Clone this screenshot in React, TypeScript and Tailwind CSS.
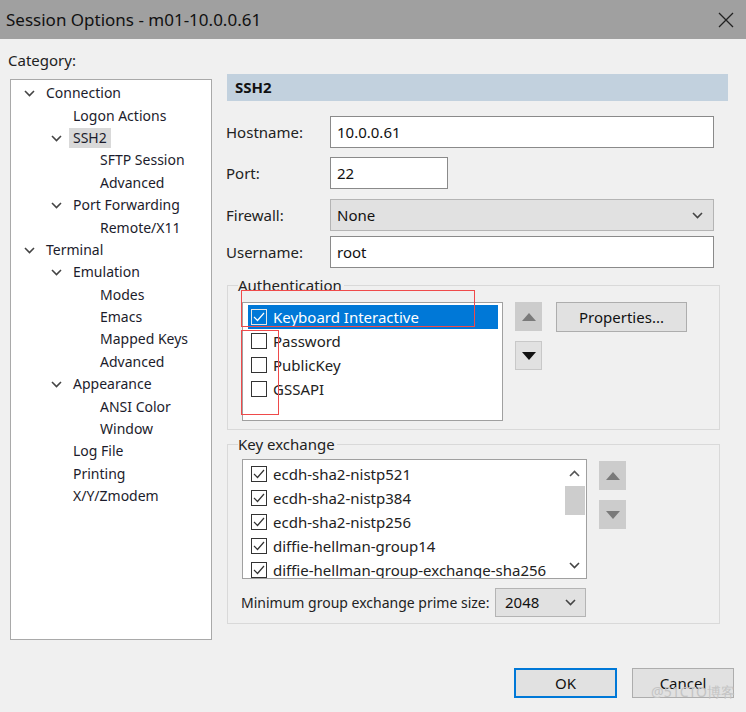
import React from "react"

const FONT = { fontFamily: '"Noto Sans", "Open Sans", sans-serif' }

function Chevron({ className = "" }: { className?: string }) {
  return (
    <svg width="11" height="7" viewBox="0 0 11 7" className={className}>
      <polyline points="1,1 5.5,5.5 10,1" fill="none" stroke="#444" strokeWidth="1.6" />
    </svg>
  )
}

function Check({ checked, light }: { checked?: boolean; light?: boolean }) {
  return (
    <div
      className={
        "w-[16px] h-[16px] border flex items-center justify-center shrink-0 " +
        (light ? "border-[#e6e6e6] bg-[#0078d7]" : "border-[#333] bg-white")
      }
    >
      {checked && (
        <svg width="12" height="10" viewBox="0 0 12 10">
          <polyline
            points="1,5 4.5,8.5 11,1"
            fill="none"
            stroke={light ? "#ffffff" : "#333"}
            strokeWidth="1.2"
          />
        </svg>
      )}
    </div>
  )
}

function Tri({ up, dark }: { up?: boolean; dark?: boolean }) {
  return (
    <svg width="14" height="8" viewBox="0 0 14 8">
      <polygon
        points={up ? "0,8 14,8 7,0" : "0,0 14,0 7,8"}
        fill={dark ? "#111" : "#7a7a7a"}
      />
    </svg>
  )
}

type Node = { label: string; level: number; open?: boolean; selected?: boolean }

const tree: Node[] = [
  { label: "Connection", level: 0, open: true },
  { label: "Logon Actions", level: 1 },
  { label: "SSH2", level: 1, open: true, selected: true },
  { label: "SFTP Session", level: 2 },
  { label: "Advanced", level: 2 },
  { label: "Port Forwarding", level: 1, open: true },
  { label: "Remote/X11", level: 2 },
  { label: "Terminal", level: 0, open: true },
  { label: "Emulation", level: 1, open: true },
  { label: "Modes", level: 2 },
  { label: "Emacs", level: 2 },
  { label: "Mapped Keys", level: 2 },
  { label: "Advanced", level: 2 },
  { label: "Appearance", level: 1, open: true },
  { label: "ANSI Color", level: 2 },
  { label: "Window", level: 2 },
  { label: "Log File", level: 1 },
  { label: "Printing", level: 1 },
  { label: "X/Y/Zmodem", level: 1 },
]

const indent = ["pl-[34px]", "pl-[61px]", "pl-[88px]"]

function TreeView() {
  return (
    <div className="w-[202px] h-[561px] bg-white border border-[#a9a9a9] pt-[2px]">
      {tree.map((n, i) => (
        <div key={i} className={"relative h-[22.4px] flex items-center " + indent[n.level]}>
          {n.open && (
            <Chevron className="absolute top-[8px] -ml-[21px]" />
          )}
          <span
            className={
              "px-[1px] leading-[20px] text-[14px] text-[#1c1c2c] " +
              (n.selected ? "bg-[#d9d9d9] px-[4px] -ml-[3px]" : "")
            }
          >
            {n.label}
          </span>
        </div>
      ))}
    </div>
  )
}

function Field({ label, children, mt }: { label: string; children: React.ReactNode; mt: string }) {
  return (
    <div className={"flex items-center " + mt}>
      <div className="w-[103px] text-[15px] text-[#222] -ml-[1px] mr-[1px]">{label}</div>
      {children}
    </div>
  )
}

const authItems = ["Keyboard Interactive", "Password", "PublicKey", "GSSAPI"]
const kexItems = [
  "ecdh-sha2-nistp521",
  "ecdh-sha2-nistp384",
  "ecdh-sha2-nistp256",
  "diffie-hellman-group14",
  "diffie-hellman-group-exchange-sha256",
]

export default function App() {
  return (
    <div className="w-[746px] h-[712px] bg-[#f0f0f0] flex flex-col overflow-hidden" style={FONT}>
      {/* title bar */}
      <div className="h-[39px] bg-[#a0a0a0] flex items-center justify-between pl-[6px] pr-[12px] shrink-0">
        <span className="text-[17px] text-[#111]">Session Options - m01-10.0.0.61</span>
        <svg width="16" height="16" viewBox="0 0 16 16">
          <path d="M1 1 L15 15 M15 1 L1 15" stroke="#222" strokeWidth="1.3" />
        </svg>
      </div>

      <div className="flex">
        {/* left */}
        <div className="pl-[10px] w-[227px] shrink-0">
          <div className="text-[15px] text-[#222] leading-[20px] mt-[11px] -ml-[2px]">Category:</div>
          <div className="mt-[9px]">
            <TreeView />
          </div>
        </div>

        {/* right */}
        <div className="w-[501px] pt-[35px]">
          <div className="h-[27px] bg-[#c2d1de] flex items-center pl-[8px]">
            <span className="text-[15px] font-bold text-[#111]">SSH2</span>
          </div>

          <Field label="Hostname:" mt="mt-[15px]">
            <div className="w-[384px] h-[32px] bg-white border border-[#8a8a8a] flex items-center pl-[6px] text-[15px] text-[#111]">
              10.0.0.61
            </div>
          </Field>
          <Field label="Port:" mt="mt-[9px]">
            <div className="w-[118px] h-[32px] bg-white border border-[#8a8a8a] flex items-center pl-[6px] text-[15px] text-[#111]">
              22
            </div>
          </Field>
          <Field label="Firewall:" mt="mt-[10px]">
            <div className="w-[384px] h-[32px] bg-[#e1e1e1] border border-[#b4b4b4] flex items-center justify-between pl-[6px] pr-[10px] text-[15px] text-[#111]">
              None
              <Chevron />
            </div>
          </Field>
          <Field label="Username:" mt="mt-[5px]">
            <div className="w-[384px] h-[32px] bg-white border border-[#8a8a8a] flex items-center pl-[6px] text-[15px] text-[#111]">
              root
            </div>
          </Field>

          {/* authentication */}
          <div className="relative mt-[17px] w-[493px] h-[145px] border border-[#d9d9d9]">
            <div className="absolute -top-[11px] left-[10px] bg-[#f0f0f0] pr-[2px] text-[15px] leading-[20px] text-[#222]">
              Authentication
            </div>
            <div className="flex mt-[16px] ml-[14px]">
              <div className="w-[261px] h-[119px] bg-white border border-[#a0a0a0] pt-[2px] pl-[5px] pr-[4px]">
                {authItems.map((a, i) => (
                  <div
                    key={a}
                    className={
                      "h-[24px] flex items-center gap-[6px] pl-[3px] text-[15px] " +
                      (i === 0 ? "bg-[#0078d7] text-white" : "text-[#222]")
                    }
                  >
                    <Check checked={i === 0} light={i === 0} />
                    {a}
                  </div>
                ))}
              </div>
              <div className="ml-[12px] flex flex-col gap-[10px]">
                <div className="w-[27px] h-[29px] bg-[#cccccc] flex items-center justify-center">
                  <Tri up />
                </div>
                <div className="w-[27px] h-[29px] bg-[#e1e1e1] border border-[#c8c8c8] flex items-center justify-center">
                  <Tri dark />
                </div>
              </div>
              <div className="ml-[14px] w-[131px] h-[30px] bg-[#e1e1e1] border border-[#adadad] flex items-center justify-center text-[15px] text-[#111]">
                Properties...
              </div>
            </div>
            {/* red annotation boxes */}
            <div className="absolute left-[13px] top-[4px] w-[234px] h-[37px] border border-[#ef4a4a]" />
            <div className="absolute left-[13px] top-[44px] w-[38px] h-[85px] border border-[#ef4a4a]" />
          </div>

          {/* key exchange */}
          <div className="relative mt-[14px] w-[493px] h-[180px] border border-[#d9d9d9]">
            <div className="absolute -top-[11px] left-[10px] bg-[#f0f0f0] pr-[2px] text-[15px] leading-[20px] text-[#222]">
              Key exchange
            </div>
            <div className="flex mt-[14px] ml-[14px]">
              <div className="w-[345px] h-[120px] bg-white border border-[#a0a0a0] flex overflow-hidden">
                <div className="flex-1 pt-[2px] pl-[8px] overflow-hidden">
                  {kexItems.map((k) => (
                    <div key={k} className="h-[24px] flex items-center gap-[6px] text-[15px] text-[#222] whitespace-nowrap">
                      <Check checked />
                      {k}
                    </div>
                  ))}
                </div>
                <div className="w-[23px] flex flex-col items-center bg-white">
                  <div className="h-[26px] flex items-center justify-center">
                    <svg width="11" height="7" viewBox="0 0 11 7">
                      <polyline points="1,6 5.5,1.5 10,6" fill="none" stroke="#555" strokeWidth="1.6" />
                    </svg>
                  </div>
                  <div className="w-[20px] h-[29px] bg-[#cdcdcd]" />
                  <div className="flex-1" />
                  <div className="h-[26px] flex items-center justify-center">
                    <Chevron />
                  </div>
                </div>
              </div>
              <div className="ml-[12px] flex flex-col gap-[10px] mt-[2px]">
                <div className="w-[27px] h-[29px] bg-[#cccccc] flex items-center justify-center">
                  <Tri up />
                </div>
                <div className="w-[27px] h-[29px] bg-[#cccccc] flex items-center justify-center">
                  <Tri />
                </div>
              </div>
            </div>
            <div className="flex items-center mt-[9px] ml-[13px]">
              <span className="text-[14px] text-[#222] w-[254px] whitespace-nowrap">
                Minimum group exchange prime size:
              </span>
              <div className="w-[91px] h-[29px] bg-[#e1e1e1] border border-[#b4b4b4] flex items-center justify-between pl-[9px] pr-[9px] text-[15px] text-[#111]">
                2048
                <Chevron />
              </div>
            </div>
          </div>
        </div>
      </div>

      {/* buttons */}
      <div className="flex justify-end gap-[15px] pr-[12px] mt-[28px]">
        <div className="w-[103px] h-[30px] bg-[#e1e1e1] border-2 border-[#0078d7] flex items-center justify-center text-[15px] text-[#111]">
          OK
        </div>
        <div className="relative w-[102px] h-[30px] bg-[#e1e1e1] border border-[#adadad] flex items-center justify-center text-[15px] text-[#111]">
          Cancel
          <span className="absolute right-[-2px] top-[12px] text-[14px] text-[#c4c4c4] whitespace-nowrap">
            @51CTO博客
          </span>
        </div>
      </div>
    </div>
  )
}
